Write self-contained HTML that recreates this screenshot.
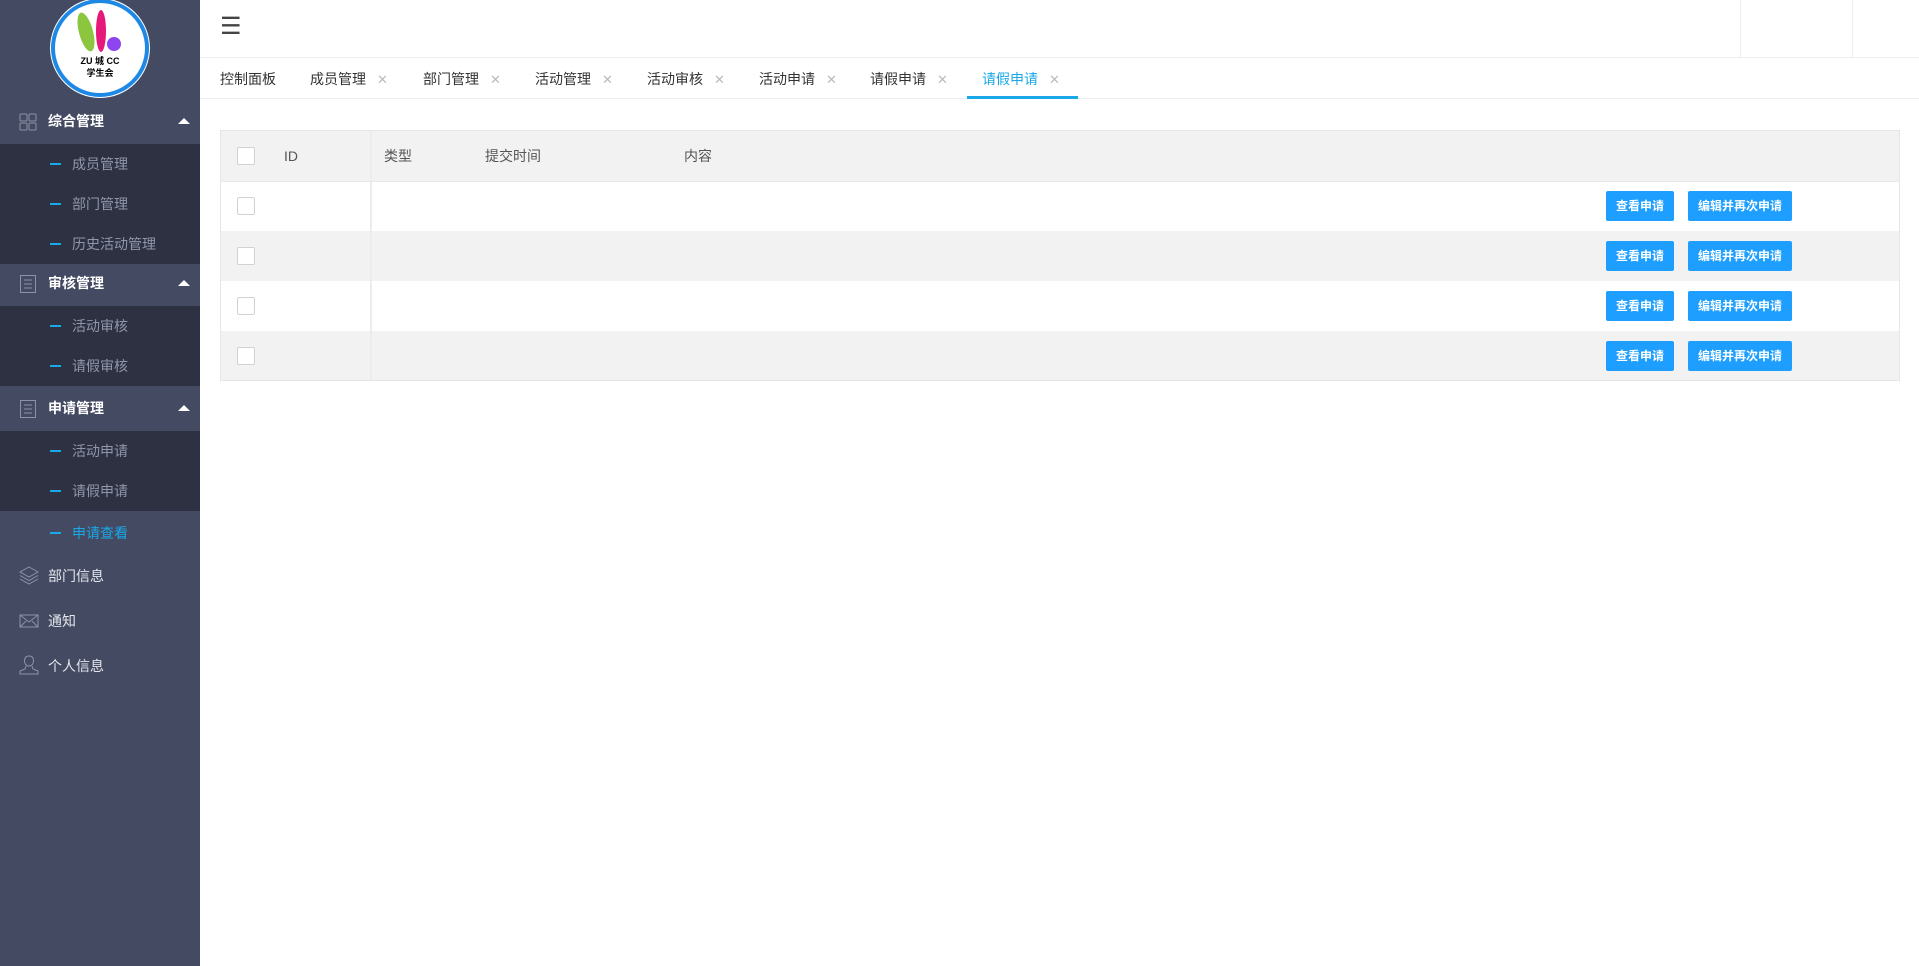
<!DOCTYPE html>
<html><head><meta charset="utf-8"><style>
*{margin:0;padding:0;box-sizing:border-box}
body{width:1919px;height:966px;overflow:hidden;background:#fff;font-family:"Liberation Sans","Noto Sans CJK SC",sans-serif;position:relative}
.sb{position:absolute;left:0;top:0;width:200px;height:966px;background:#434a62}
.a{position:absolute;left:0;width:200px}
.hd{height:42px;color:#fff;font-size:14px;font-weight:bold;line-height:38px;padding-left:48px}
.sub{background:#2d3142}
.it{height:40px;line-height:40px;font-size:14px;color:#9097ab;padding-left:72px;position:relative}
.it:before{content:"";position:absolute;left:50px;top:19px;width:11px;height:2px;background:#1aa8e8}
.car{position:absolute;right:10px;top:16px;width:0;height:0;border-left:6px solid transparent;border-right:6px solid transparent;border-bottom:6px solid #fff}
.ic{position:absolute;left:19px;top:11px}
.top{position:absolute;left:200px;top:0;right:0;height:58px;border-bottom:1px solid #eee}
.tabs{position:absolute;left:200px;top:58px;right:0;height:41px;border-bottom:1px solid #eee}
.tab{position:absolute;top:1px;height:41px;line-height:41px;font-size:14px;color:#333}
.x{color:#bbb;font-size:13px;margin-left:11px}
.tbl{position:absolute;left:220px;top:130px;width:1680px;height:251px;border:1px solid #e6e6e6}
.row{position:absolute;left:0;width:1678px;height:50px}
.cb{position:absolute;left:16px;top:16px;width:18px;height:18px;border:1px solid #d2d2d2;background:#fff;border-radius:2px}
.btn{position:absolute;top:10px;height:30px;line-height:30px;background:#1e9fff;color:#fff;font-size:12px;font-weight:bold;text-align:center;border-radius:2px}
.hc{position:absolute;top:0;line-height:50px;font-size:14px;color:#555}
.lo{font-weight:normal;height:44px;line-height:44px;color:#e4e6ec}
</style></head><body>
<div class="sb">
 <svg style="position:absolute;left:48px;top:-4px" width="104" height="104" viewBox="0 0 104 104">
  <circle cx="52" cy="52" r="50" fill="#fff"/><circle cx="52" cy="52" r="47" fill="none" stroke="#1e88e5" stroke-width="4"/>
  <ellipse cx="38" cy="36" rx="7" ry="20" fill="#8cc63f" transform="rotate(-15 38 36)"/>
  <ellipse cx="53" cy="35" rx="5" ry="21" fill="#e6197a"/>
  <circle cx="66" cy="48" r="7" fill="#8e44ef"/>
  <text x="52" y="68" font-size="9" font-weight="bold" text-anchor="middle" font-family="Liberation Sans,Noto Sans CJK SC,sans-serif">ZU 城 CC</text>
  <text x="52" y="80" font-size="9" font-weight="bold" text-anchor="middle" font-family="Noto Sans CJK SC,sans-serif">学生会</text>
 </svg>
 <div class="a" style="top:102px"><div class="hd">综合管理</div><div class="car"></div>
  <svg class="ic" width="18" height="18" viewBox="0 0 18 18" fill="none" stroke="#8d93a6"><rect x="1" y="1" width="7" height="7" rx="1"/><rect x="10" y="1" width="7" height="7" rx="1"/><rect x="1" y="10" width="7" height="7" rx="1"/><rect x="10" y="10" width="7" height="7" rx="1"/></svg></div>
 <div class="a sub" style="top:144px"><div class="it">成员管理</div><div class="it">部门管理</div><div class="it">历史活动管理</div></div>
 <div class="a" style="top:264px"><div class="hd">审核管理</div><div class="car"></div>
  <svg class="ic" width="18" height="18" viewBox="0 0 18 18" fill="none" stroke="#8d93a6"><rect x="1.5" y="0.5" width="15" height="17"/><path d="M5 5h8M5 9h8M5 13h8"/></svg></div>
 <div class="a sub" style="top:306px"><div class="it">活动审核</div><div class="it">请假审核</div></div>
 <div class="a" style="top:389px"><div class="hd">申请管理</div><div class="car"></div>
  <svg class="ic" width="18" height="18" viewBox="0 0 18 18" fill="none" stroke="#8d93a6"><rect x="1.5" y="0.5" width="15" height="17"/><path d="M5 5h8M5 9h8M5 13h8"/></svg></div>
 <div class="a sub" style="top:431px"><div class="it">活动申请</div><div class="it">请假申请</div></div>
 <div class="a" style="top:513px"><div class="it" style="color:#1aa8e8">申请查看</div></div>
 <div class="a" style="top:554px"><div class="hd lo">部门信息</div>
  <svg class="ic" width="20" height="20" viewBox="0 0 20 20" fill="none" stroke="#8d93a6"><path d="M10 2 19 7 10 12 1 7Z"/><path d="M1 10.5l9 5 9-5M1 14l9 5 9-5"/></svg></div>
 <div class="a" style="top:599px"><div class="hd lo">通知</div>
  <svg class="ic" style="top:15px" width="20" height="14" viewBox="0 0 20 14" fill="none" stroke="#8d93a6"><rect x="1" y="1" width="18" height="12"/><path d="M1 1l9 7 9-7M1 13l6-6M19 13l-6-6"/></svg></div>
 <div class="a" style="top:644px"><div class="hd lo">个人信息</div>
  <svg class="ic" width="20" height="20" viewBox="0 0 20 20" fill="none" stroke="#8d93a6"><path d="M10 1c3 0 4.5 2 4.5 5s-2 5-4.5 5-4.5-2-4.5-5S7 1 10 1zM7 11l-1 3-5 2v3h18v-3l-5-2-1-3"/></svg></div>
</div>
<div class="top">
 <div style="position:absolute;left:20px;top:12px;font-size:24px;color:#444">☰</div>
 <div style="position:absolute;left:1540px;top:0;width:1px;height:58px;background:#eee"></div>
 <div style="position:absolute;left:1652px;top:0;width:1px;height:58px;background:#eee"></div>
</div>
<div class="tabs">
 <div class="tab" style="left:20px">控制面板</div>
 <div class="tab" style="left:110px">成员管理<span class="x">✕</span></div>
 <div class="tab" style="left:223px">部门管理<span class="x">✕</span></div>
 <div class="tab" style="left:335px">活动管理<span class="x">✕</span></div>
 <div class="tab" style="left:447px">活动审核<span class="x">✕</span></div>
 <div class="tab" style="left:559px">活动申请<span class="x">✕</span></div>
 <div class="tab" style="left:670px">请假申请<span class="x">✕</span></div>
 <div class="tab" style="left:782px;color:#1aa8e8">请假申请<span class="x">✕</span></div>
 <div style="position:absolute;left:767px;top:38px;width:111px;height:3px;background:#1aa8e8"></div>
</div>
<div class="tbl">
 <div class="row" style="top:0;background:#f2f2f2;height:50px"><div class="cb"></div>
  <div class="hc" style="left:63px">ID</div><div class="hc" style="left:163px">类型</div><div class="hc" style="left:264px">提交时间</div><div class="hc" style="left:463px">内容</div></div>
 <div class="row" style="top:50px;background:#fff"><div class="cb"></div><div class="btn" style="left:1385px;width:68px">查看申请</div><div class="btn" style="left:1467px;width:104px">编辑并再次申请</div></div>
 <div class="row" style="top:100px;background:#f2f2f2"><div class="cb"></div><div class="btn" style="left:1385px;width:68px">查看申请</div><div class="btn" style="left:1467px;width:104px">编辑并再次申请</div></div>
 <div class="row" style="top:150px;background:#fff"><div class="cb"></div><div class="btn" style="left:1385px;width:68px">查看申请</div><div class="btn" style="left:1467px;width:104px">编辑并再次申请</div></div>
 <div class="row" style="top:200px;background:#f2f2f2;height:49px"><div class="cb"></div><div class="btn" style="left:1385px;width:68px">查看申请</div><div class="btn" style="left:1467px;width:104px">编辑并再次申请</div></div>
 <div style="position:absolute;left:149px;top:0;width:2px;height:249px;background:#ececec"></div>
 <div style="position:absolute;left:0;top:50px;width:1678px;height:1px;background:#e8e8e8"></div>
</div>
</body></html>
